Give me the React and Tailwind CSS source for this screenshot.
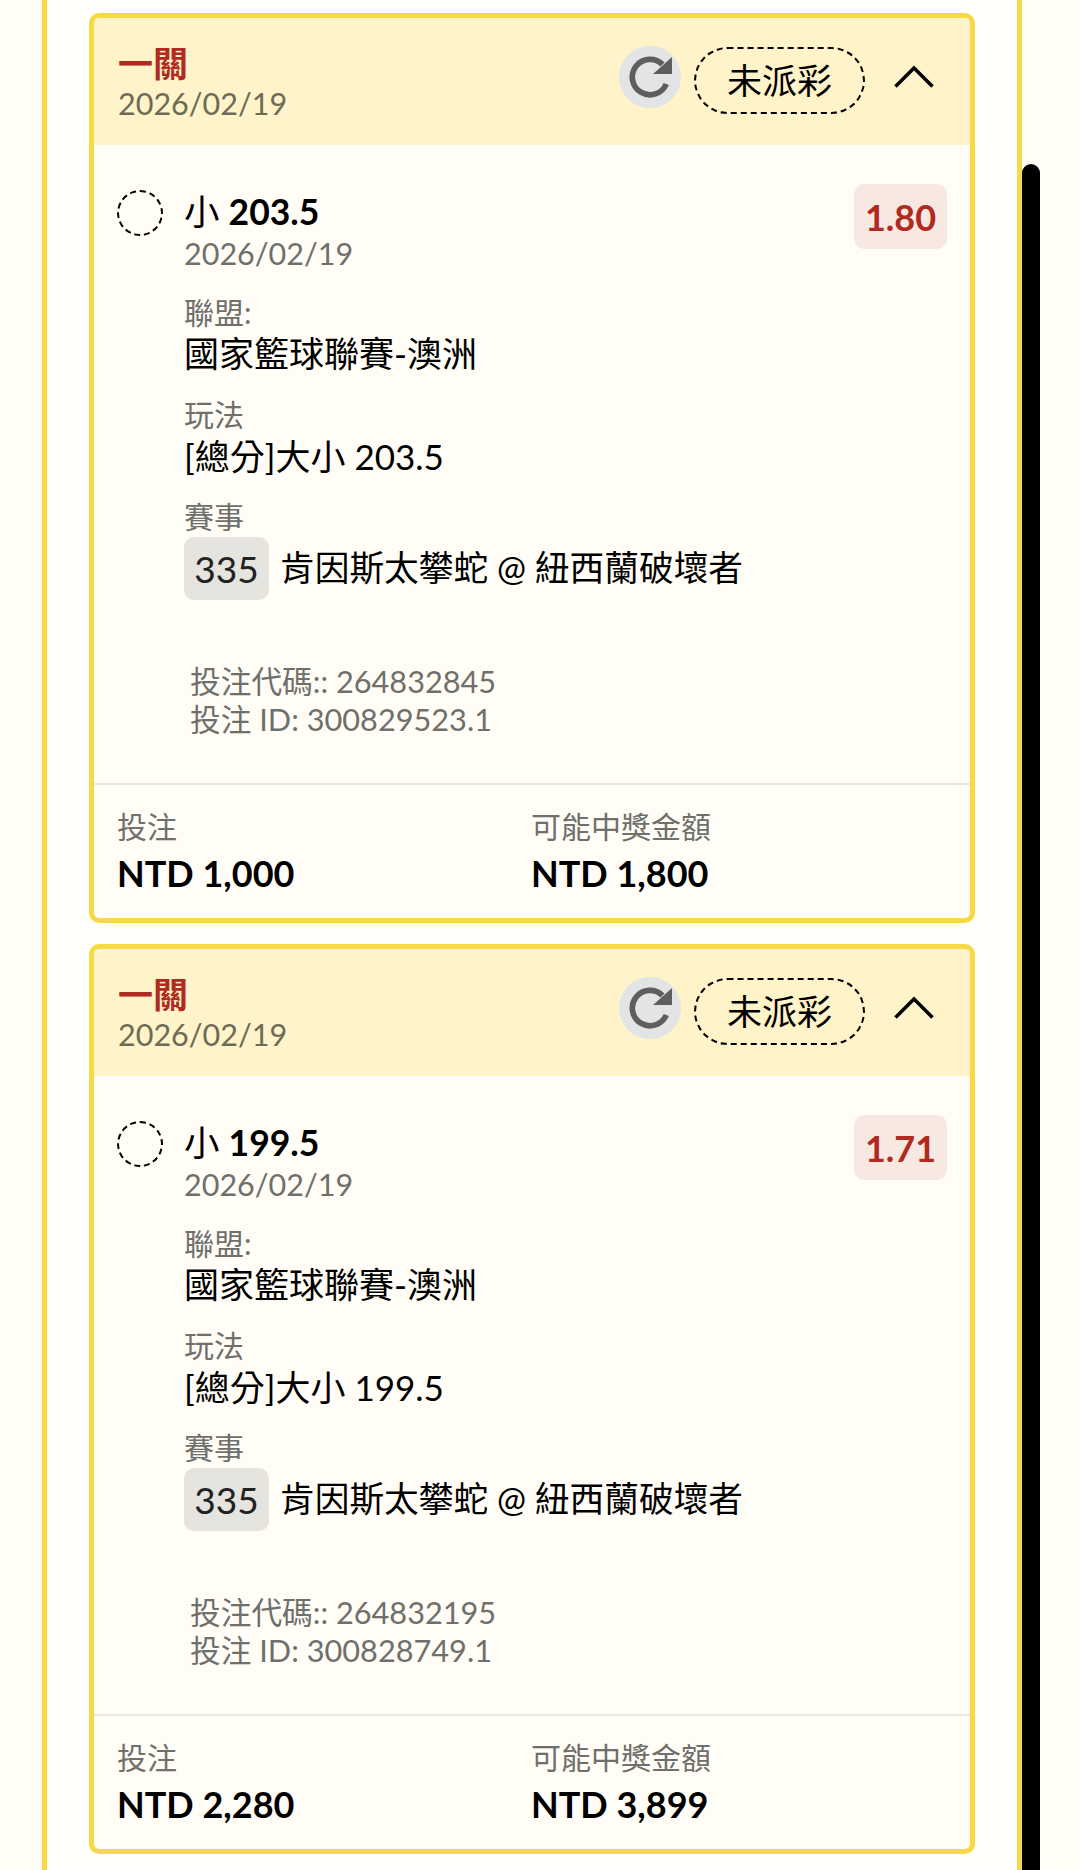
import React from "react";

const bets = [
  {
    pick: "203.5",
    odds: "1.80",
    code: "264832845",
    betId: "300829523.1",
    stake: "NTD 1,000",
    payout: "NTD 1,800",
  },
  {
    pick: "199.5",
    odds: "1.71",
    code: "264832195",
    betId: "300828749.1",
    stake: "NTD 2,280",
    payout: "NTD 3,899",
  },
];

// Circular reload arrow
const ReloadIcon = () => (
  <svg width="42" height="42" viewBox="0 0 42 42" fill="none" className="overflow-visible">
    <path d="M37.3 28 A17.7 17.7 0 1 1 33.5 8.5" stroke="#5e5e5e" strokeWidth="5.7" />
    <path d="M43 1 V18 H24 Z" fill="#5e5e5e" />
  </svg>
);

const BetCard = ({ bet }) => {
  return (
    <div className="h-[910px] flex flex-col rounded-[10px] border-[5px] border-[#f7d945] bg-[#fffdf6] overflow-hidden">
      {/* Header */}
      <div className="h-[127px] shrink-0 bg-[#fff3c9] flex items-start pl-[24px] pr-[36px] pt-[25px]">
        <div className="flex-1">
          <div className="text-[35px] leading-[40px] font-bold text-[#b02a20]">一關</div>
          <div className="mt-[1px] text-[30.5px] leading-[38px] text-[#6d6a55]">2026/02/19</div>
        </div>
        <div className="flex items-start mt-[3px]">
          <div className="w-[62px] h-[62px] rounded-full bg-[#e2e4e6] flex items-center justify-center">
            <ReloadIcon />
          </div>
          <div className="w-[171px] h-[67px] ml-[13px] mt-[1px] rounded-full border-2 border-dashed border-black flex items-center justify-center text-[35px] text-black">
            未派彩
          </div>
          <svg width="40" height="24" viewBox="0 0 40 24" fill="none" stroke="#000" strokeWidth="3.5" className="ml-[29px] mt-[18px]">
            <path d="M1.5 22.5 L20 4 L38.5 22.5" />
          </svg>
        </div>
      </div>

      {/* Selection details */}
      <div className="flex-1 pl-[24px] pr-[23px] pt-[39px]">
        <div className="flex items-start">
          <div className="w-[46px] h-[46px] -ml-[1px] mt-[6px] shrink-0 rounded-full border-2 border-dashed border-black"></div>
          <div className="flex-1 ml-[21px] mt-[4px]">
            <div className="text-[35.5px] leading-[47px] text-black">
              小 <span className="font-bold">{bet.pick}</span>
            </div>
            <div className="text-[30.5px] leading-[36px] text-[#6f6f6b]">2026/02/19</div>
          </div>
          <div className="w-[93px] h-[65px] rounded-[10px] bg-[#f7e8e2] flex items-center justify-center text-[36px] font-bold text-[#b02a20]">
            {bet.odds}
          </div>
        </div>

        <div className="ml-[66px]">
          <div className="mt-[23px] text-[30px] leading-[36px] text-[#6f6f6b]">聯盟:</div>
          <div className="text-[35px] leading-[46px] text-black">國家籃球聯賽-澳洲</div>
          <div className="mt-[20px] text-[30px] leading-[36px] text-[#6f6f6b]">玩法</div>
          <div className="mt-[1px] text-[35px] leading-[46px] text-black">[總分]大小 {bet.pick}</div>
          <div className="mt-[19px] text-[30px] leading-[36px] text-[#6f6f6b]">賽事</div>
          <div className="mt-[3px] flex items-center text-[34.7px] text-black">
            <div className="w-[85px] h-[63px] rounded-[10px] bg-[#e5e4df] flex items-center justify-center text-[37px] text-[#222]">335</div>
            <div className="ml-[11px]">肯因斯太攀蛇 @ 紐西蘭破壞者</div>
          </div>
          <div className="ml-[6px] mt-[63px] text-[30.7px] leading-[38px] text-[#6f6f6b]">
            <div>投注代碼:: {bet.code}</div>
            <div>投注 ID: {bet.betId}</div>
          </div>
        </div>
      </div>

      {/* Stake and possible payout */}
      <div className="h-[135px] shrink-0 border-t-2 border-[#e8e7e1] pl-[23px] pt-[22px] flex">
        <div className="w-[414px]">
          <div className="text-[30px] leading-[38px] text-[#6f6f6b]">投注</div>
          <div className="mt-[5px] text-[36px] leading-[46px] font-bold text-black">{bet.stake}</div>
        </div>
        <div>
          <div className="text-[30px] leading-[38px] text-[#6f6f6b]">可能中獎金額</div>
          <div className="mt-[5px] text-[36px] leading-[46px] font-bold text-black">{bet.payout}</div>
        </div>
      </div>
    </div>
  );
};

const App = () => {
  return (
    <div
      className="relative h-[1870px] overflow-hidden bg-[#fffdf6] pl-[42px]"
      style={{ fontFamily: 'Lato, "Noto Sans CJK TC", sans-serif' }}
    >
      <div className="w-[980px] h-full border-x-[5px] border-[#f7d945] bg-[#fffffb] pl-[42px] pt-[13px]">
        <div className="w-[886px] flex flex-col gap-[21px]">
          {bets.map((bet) => (
            <BetCard key={bet.code} bet={bet} />
          ))}
        </div>
      </div>

      {/* Scrollbar thumb */}
      <div className="absolute left-[1022px] top-[164px] w-[18px] h-[1800px] rounded-full bg-black"></div>
    </div>
  );
};

export default App;
